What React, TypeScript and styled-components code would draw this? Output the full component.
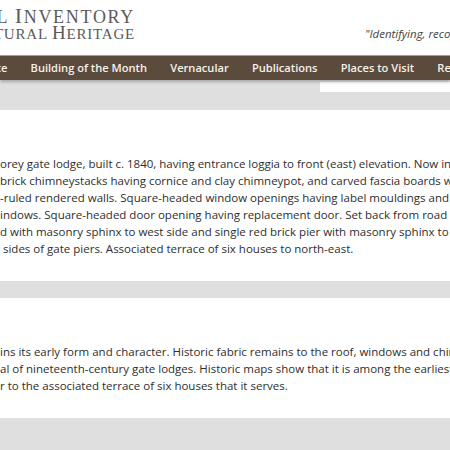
import styled, { createGlobalStyle } from 'styled-components';

const GlobalStyle = createGlobalStyle`
  html, body {
    margin: 0;
    padding: 0;
    overflow: hidden;
    background: #dfdfdf;
  }

  body {
    font-family: 'Open Sans', 'Liberation Sans', sans-serif;
    color: #333;
  }
`;

const Page = styled.div`
  width: 450px;
  height: 450px;
  overflow: hidden;
  display: flex;
  flex-direction: column;
`;

const Header = styled.header`
  height: 55px;
  flex-shrink: 0;
  background: #fff;
  display: flex;
  justify-content: space-between;
`;

const Logo = styled.div`
  width: 135px;
  overflow: hidden;
  display: flex;
  flex-direction: column;
  align-items: flex-end;
  padding-top: 6px;
  font-family: 'Liberation Serif', 'DejaVu Serif', serif;
  text-transform: uppercase;
  color: #5a5a5a;
  white-space: nowrap;
`;

const LogoLine = styled.span<{ $size: number; $spacing: number }>`
  display: block;
  height: ${({ $size }) => Math.round($size * 1.05)}px;
  font-size: ${({ $size }) => $size}px;
  letter-spacing: ${({ $spacing }) => $spacing}px;
  line-height: ${({ $size }) => Math.round($size * 1.05)}px;
`;

const LogoCap = styled.span<{ $size: number }>`
  font-size: ${({ $size }) => $size}px;
`;

const Tagline = styled.p`
  margin: 26px 0 0;
  width: 85px;
  white-space: nowrap;
  font-size: 11.5px;
  font-style: italic;
  color: #444;
`;

const Nav = styled.nav`
  height: 24px;
  flex-shrink: 0;
  border-top: 1px solid #b99b73;
  background: #5b4b3c;
  box-shadow: 0 2px 3px rgba(0, 0, 0, 0.25);
  position: relative;
  z-index: 1;
`;

const NavList = styled.ul`
  display: flex;
  margin: 0 0 0 -79px;
  padding: 0;
  list-style: none;
  white-space: nowrap;
`;

const NavItem = styled.li`
  padding: 0 11.6px;
  line-height: 24px;
  font-size: 11.1px;
  font-weight: 600;
  color: #f6f1ea;
`;

const Main = styled.main`
  flex: 1;
  display: flex;
  flex-direction: column;
  background: #dfdfdf;
`;

const TopBand = styled.div`
  height: 30px;
  flex-shrink: 0;
  display: flex;
  justify-content: flex-end;
  align-items: flex-start;
`;

const SearchStrip = styled.div`
  width: 130px;
  height: 10px;
  margin-top: 2px;
  background: #fff;
`;

const Card = styled.section<{ $height: number }>`
  height: ${({ $height }) => $height}px;
  flex-shrink: 0;
  box-sizing: border-box;
  background: #fff;
  padding-top: 45px;
`;

const Gap = styled.div`
  height: 17px;
  flex-shrink: 0;
`;

const Text = styled.p`
  margin: 0;
  font-size: 11.5px;
  line-height: 17px;
  white-space: nowrap;
  color: #2e2e2e;
`;

const navLinks = [
  'Map Interface',
  'Building of the Month',
  'Vernacular',
  'Publications',
  'Places to Visit',
  'Resources',
];

const description = [
  'orey gate lodge, built c. 1840, having entrance loggia to front (east) elevation. Now in use as a dwelling.',
  'brick chimneystacks having cornice and clay chimneypot, and carved fascia boards with',
  '-ruled rendered walls. Square-headed window openings having label mouldings and',
  'indows. Square-headed door opening having replacement door. Set back from road on',
  'd with masonry sphinx to west side and single red brick pier with masonry sphinx to east',
  '\u00a0sides of gate piers. Associated terrace of six houses to north-east.',
];

const appraisal = [
  'ins its early form and character. Historic fabric remains to the roof, windows and chimneys',
  'al of nineteenth-century gate lodges. Historic maps show that it is among the earliest examples',
  'r to the associated terrace of six houses that it serves.',
];

const App = () => (
  <Page>
    <GlobalStyle />
    <Header>
      <Logo>
        <LogoLine $size={18} $spacing={1.7}>
          <LogoCap $size={22}>N</LogoCap>ational <LogoCap $size={22}>I</LogoCap>nventory
        </LogoLine>
        <LogoLine $size={15} $spacing={0.8}>
          of <LogoCap $size={19}>A</LogoCap>rchitectural <LogoCap $size={19}>H</LogoCap>eritage
        </LogoLine>
      </Logo>
      <Tagline>"Identifying, recording and protecting"</Tagline>
    </Header>
    <Nav>
      <NavList>
        {navLinks.map((link) => (
          <NavItem key={link}>{link}</NavItem>
        ))}
      </NavList>
    </Nav>
    <Main>
      <TopBand>
        <SearchStrip />
      </TopBand>
      <Card $height={171}>
        <Text>
          {description.map((line, i) => (
            <span key={i}>
              {line}
              <br />
            </span>
          ))}
        </Text>
      </Card>
      <Gap />
      <Card $height={120}>
        <Text>
          {appraisal.map((line, i) => (
            <span key={i}>
              {line}
              <br />
            </span>
          ))}
        </Text>
      </Card>
    </Main>
  </Page>
);

export default App;
